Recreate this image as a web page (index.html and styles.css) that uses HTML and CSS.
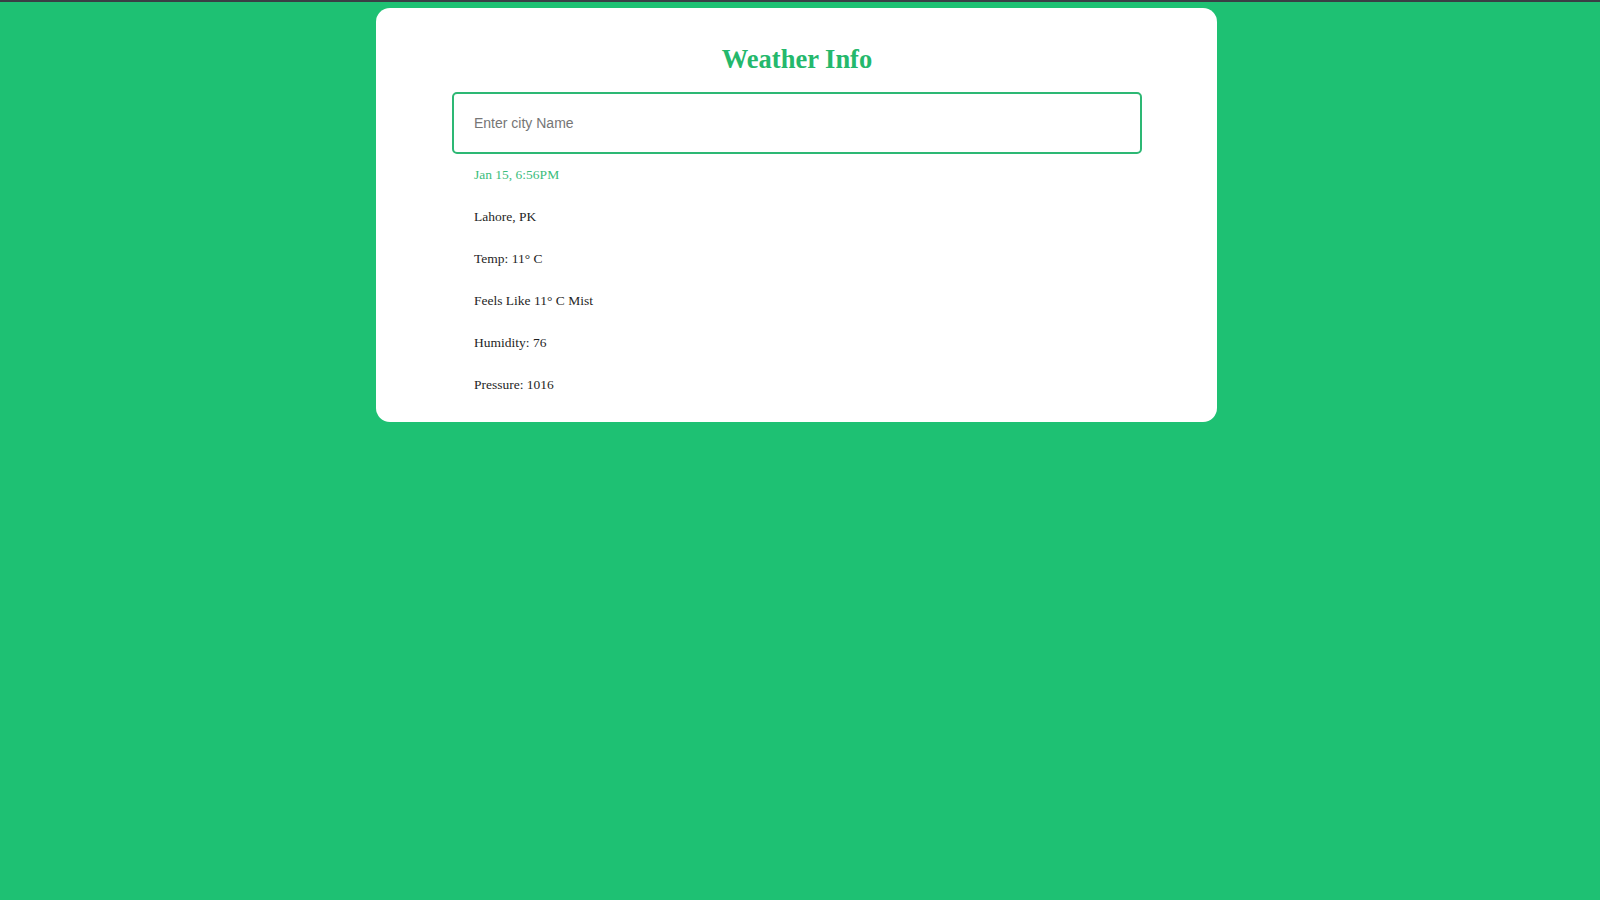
FILE: index.html
```html
<!DOCTYPE html>
<html lang="en">
<head>
<meta charset="utf-8">
<title>Weather Info</title>
<link rel="stylesheet" href="styles.css">
</head>
<body>
  <main class="card">
    <h1 class="title">Weather Info</h1>
    <input class="city-input" type="text" placeholder="Enter city Name">
    <div class="info">
      <p class="date">Jan 15, 6:56PM</p>
      <p>Lahore, PK</p>
      <p>Temp: 11° C</p>
      <p>Feels Like 11° C Mist</p>
      <p>Humidity: 76</p>
      <p>Pressure: 1016</p>
    </div>
  </main>
</body>
</html>
```
FILE: styles.css
```css
html, body {
  margin: 0;
  padding: 0;
}
body {
  background: #1ec173;
  border-top: 2px solid #3a3f45;
  min-height: 898px;
  padding-right: 7px;
  font-family: "Liberation Serif", "Times New Roman", serif;
}
.card {
  width: 841px;
  box-sizing: border-box;
  margin: 6px auto 0;
  background: #ffffff;
  border-radius: 14px;
  padding: 36px 75px 29px 76px;
  display: flex;
  flex-direction: column;
}
.title {
  margin: 0;
  text-align: center;
  font-size: 26.5px;
  line-height: 30px;
  font-weight: bold;
  color: #24b86c;
}
.city-input {
  margin-top: 18px;
  width: 690px;
  height: 62px;
  box-sizing: border-box;
  border: 2px solid #2db874;
  border-radius: 5px;
  padding: 0 20px;
  font-family: "Liberation Sans", Arial, sans-serif;
  font-size: 14px;
  color: #333;
  outline: none;
  background: #fff;
}
.city-input::placeholder {
  color: #767676;
}
.info {
  margin-top: 13px;
  padding-left: 22px;
  display: flex;
  flex-direction: column;
  gap: 26.1px;
}
.info p {
  margin: 0;
  font-size: 13.5px;
  line-height: 16px;
  color: #1f1f1f;
}
.info .date {
  color: #3bbd7c;
}
```
